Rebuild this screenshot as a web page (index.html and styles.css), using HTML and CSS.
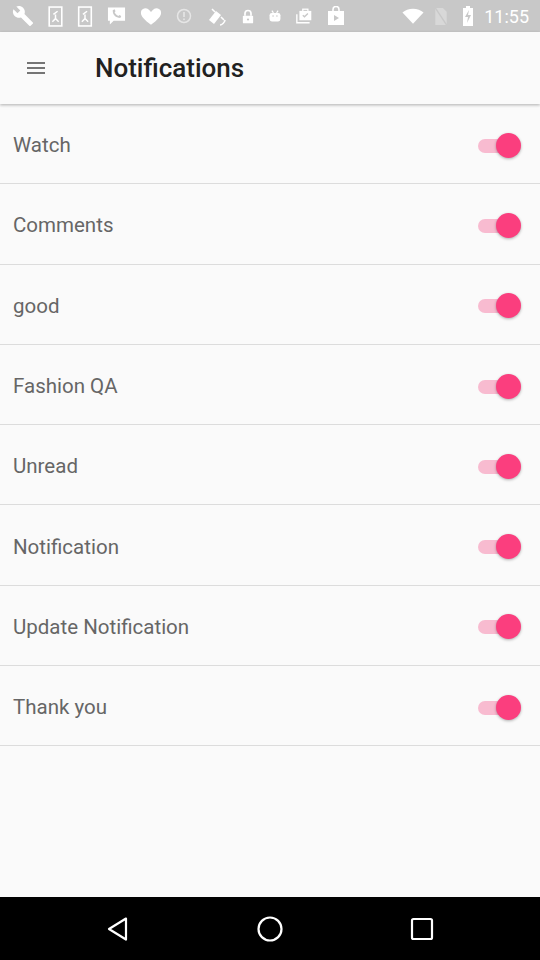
FILE: index.html
```html
<!DOCTYPE html>
<html>
<head>
<meta charset="utf-8">
<link rel="stylesheet" href="styles.css">
</head>
<body>
<div class="screen">
  <div class="statusbar">
    <div class="sb-left">
      <svg width="22" height="22" viewBox="0 0 24 24"><path fill="#fff" d="M22.7 19l-9.1-9.1c.9-2.3.4-5-1.5-6.9-2-2-5-2.4-7.4-1.3L9 6 6 9 1.6 4.7C.4 7.1.9 10.1 2.9 12.1c1.9 1.9 4.6 2.4 6.9 1.5l9.1 9.1c.4.4 1 .4 1.4 0l2.3-2.3c.5-.4.5-1.1.1-1.4z"/></svg>
      <svg width="15" height="21" viewBox="0 0 14 20"><rect x="1" y="1" width="12" height="18" fill="none" stroke="#fff" stroke-width="1.5"/><path d="M4 15 L7 12 L7 8 M7 12 L10 15 M5 8 L9 5" stroke="#fff" stroke-width="1.4" fill="none"/></svg>
      <svg width="16" height="21" viewBox="0 0 14 20"><rect x="1" y="1" width="12" height="18" fill="none" stroke="#fff" stroke-width="1.5"/><path d="M4 15 L7 12 L7 8 M7 12 L10 15 M5 8 L9 5" stroke="#fff" stroke-width="1.4" fill="none"/></svg>
      <svg width="19" height="20" viewBox="0 0 20 20"><path fill="#fff" d="M1 1h18v14H7l-4 4v-4H1z"/><path d="M6 4c0 5 3 8 8 8l1-2-2-1-1 1c-2-1-3-2-4-4l1-1-1-2z" fill="#c8c8c8"/></svg>
      <svg width="22" height="19" viewBox="0 0 24 20"><path fill="#fff" d="M12 19C5 14 1 10 1 6a5 5 0 0 1 9-3l2 2 2-2a5 5 0 0 1 9 3c0 4-4 8-11 13z"/></svg>
      <svg width="16" height="16" viewBox="0 0 16 16"><circle cx="8" cy="8" r="6.5" fill="none" stroke="#e6e6e6" stroke-width="1.5"/><rect x="7.2" y="4" width="1.6" height="5" fill="#e6e6e6"/><rect x="7.2" y="10.5" width="1.6" height="1.6" fill="#e6e6e6"/></svg>
      <svg width="22" height="22" viewBox="0 0 22 22"><path fill="#fff" d="M3 15l7-9 5 4-7 9z"/><path d="M6 4l3 3M15 12l3 3M14 20c2 0 5-3 5-5" stroke="#fff" stroke-width="1.5" fill="none"/></svg>
      <svg width="12" height="17" viewBox="0 0 14 18"><path d="M3.5 8V5.5a3.5 3.5 0 0 1 7 0V8" fill="none" stroke="#fff" stroke-width="2"/><rect x="1" y="8" width="12" height="9" rx="1" fill="#fff"/><circle cx="7" cy="12.5" r="1.3" fill="#c8c8c8"/></svg>
      <svg width="14" height="16" viewBox="0 0 18 18"><path d="M5 2l2 3M13 2l-2 3" stroke="#fff" stroke-width="1.5"/><rect x="2" y="5" width="14" height="11" rx="3" fill="#fff"/><circle cx="6.5" cy="9" r="1" fill="#c8c8c8"/><circle cx="11.5" cy="9" r="1" fill="#c8c8c8"/></svg>
      <svg width="17" height="18" viewBox="0 0 20 20"><rect x="4" y="4" width="14" height="11" fill="#fff"/><rect x="8" y="2" width="6" height="3" fill="none" stroke="#fff" stroke-width="1.5"/><path d="M8 9l2 2 4-4" stroke="#c8c8c8" stroke-width="1.6" fill="none"/><path d="M1 8v10h15" stroke="#fff" stroke-width="1.6" fill="none"/></svg>
      <svg width="18" height="20" viewBox="0 0 18 20"><path d="M6 5V3.5a3 3 0 0 1 6 0V5" fill="none" stroke="#fff" stroke-width="1.6"/><rect x="1" y="5" width="16" height="14" fill="#fff"/><path d="M7 9v6l5-3z" fill="#c8c8c8"/></svg>
    </div>
    <div class="sb-right">
      <svg class="wifi" width="22" height="17" viewBox="0 0 24 18"><path fill="#fff" d="M12 17L0.5 4.5C3.5 2 7.5 0.5 12 0.5s8.5 1.5 11.5 4z"/></svg>
      <svg class="nosim" width="14" height="19" viewBox="0 0 14 20"><path fill="#d8d8d8" d="M1 1h8l4 4v14H1z"/><path d="M1 1L13 19" stroke="#c8c8c8" stroke-width="1.5"/></svg>
      <svg class="battery" width="12" height="20" viewBox="0 0 10 20"><rect x="3" y="0" width="4" height="2" fill="#fff"/><rect x="0" y="2" width="10" height="18" fill="#fff"/><path d="M6 4L2 11h3l-1 6 4-8H5z" fill="#c8c8c8"/></svg>
      <span class="time">11:55</span>
    </div>
  </div>

  <header class="appbar">
    <svg class="menu" width="24" height="24" viewBox="0 0 24 24"><path d="M3 6h18v2H3zM3 11h18v2H3zM3 16h18v2H3z" fill="#757575"/></svg>
    <h1 class="title">Notifications</h1>
  </header>

  <main class="list">
    <div class="row"><span class="label">Watch</span><span class="switch"><span class="track"></span><span class="thumb"></span></span></div>
    <div class="row"><span class="label">Comments</span><span class="switch"><span class="track"></span><span class="thumb"></span></span></div>
    <div class="row"><span class="label">good</span><span class="switch"><span class="track"></span><span class="thumb"></span></span></div>
    <div class="row"><span class="label">Fashion QA</span><span class="switch"><span class="track"></span><span class="thumb"></span></span></div>
    <div class="row"><span class="label">Unread</span><span class="switch"><span class="track"></span><span class="thumb"></span></span></div>
    <div class="row"><span class="label">Notification</span><span class="switch"><span class="track"></span><span class="thumb"></span></span></div>
    <div class="row"><span class="label">Update Notification</span><span class="switch"><span class="track"></span><span class="thumb"></span></span></div>
    <div class="row"><span class="label">Thank you</span><span class="switch"><span class="track"></span><span class="thumb"></span></span></div>
  </main>

  <nav class="navbar">
    <svg width="26" height="26" viewBox="0 0 26 26"><path d="M21 2.5L4 13l17 10.5z" fill="none" stroke="#fff" stroke-width="2.2" stroke-linejoin="round"/></svg>
    <svg width="26" height="26" viewBox="0 0 26 26"><circle cx="13" cy="13" r="11.5" fill="none" stroke="#fff" stroke-width="2.2"/></svg>
    <svg width="26" height="26" viewBox="0 0 26 26"><rect x="3" y="3" width="20" height="20" rx="1.5" fill="none" stroke="#fff" stroke-width="2.2"/></svg>
  </nav>
</div>
</body>
</html>
```

FILE: styles.css
```css
* { box-sizing: border-box; }
html, body { margin: 0; padding: 0; }
body {
  width: 540px;
  height: 960px;
  overflow: hidden;
  font-family: Roboto, "Noto Sans", "Liberation Sans", sans-serif;
  background: #fafafa;
}
.screen {
  width: 540px;
  height: 960px;
  display: flex;
  flex-direction: column;
}
.statusbar {
  height: 32px;
  background: #c8c8c8;
  display: flex;
  align-items: center;
  justify-content: space-between;
  padding: 0 11px 0 12px;
  flex: none;
}
.sb-left {
  display: flex;
  align-items: center;
  gap: 14px;
}
.sb-right {
  display: flex;
  align-items: center;
}
.nosim { margin-left: 10px; }
.battery { margin-left: 14px; }
.time {
  color: #fff;
  font-size: 18px;
  margin-left: 10px;
}
.appbar {
  height: 72px;
  background: #fafafa;
  display: flex;
  align-items: center;
  flex: none;
  position: relative;
  z-index: 1;
  box-shadow: 0 1px 3px rgba(0,0,0,0.22), 0 2px 2px rgba(0,0,0,0.06);
}
.menu {
  margin-left: 24px;
}
.title {
  margin: 0 0 0 47px;
  font-size: 26px;
  font-weight: 500;
  color: #212121;
}
.list {
  flex: 1;
  background: #fafafa;
}
.row {
  height: 80.3px;
  border-bottom: 1.5px solid #dcdcdc;
  display: flex;
  align-items: center;
  justify-content: space-between;
  padding: 0 19px 0 13px;
}
.label {
  font-size: 20.5px;
  color: #666;
  margin-top: 3px;
}
.switch {
  position: relative;
  width: 46px;
  height: 26px;
  display: block;
  margin-top: 4px;
}
.track {
  position: absolute;
  left: 3px;
  top: 6px;
  width: 32px;
  height: 14px;
  border-radius: 7px;
  background: #f8bbd0;
}
.thumb {
  position: absolute;
  right: 0;
  top: 0;
  width: 25px;
  height: 25px;
  border-radius: 50%;
  background: #fb3e7e;
  box-shadow: 0 1px 3px rgba(0,0,0,0.3);
}
.navbar {
  height: 63px;
  background: #000;
  flex: none;
  display: flex;
  align-items: center;
  justify-content: center;
  gap: 126px;
}
```
